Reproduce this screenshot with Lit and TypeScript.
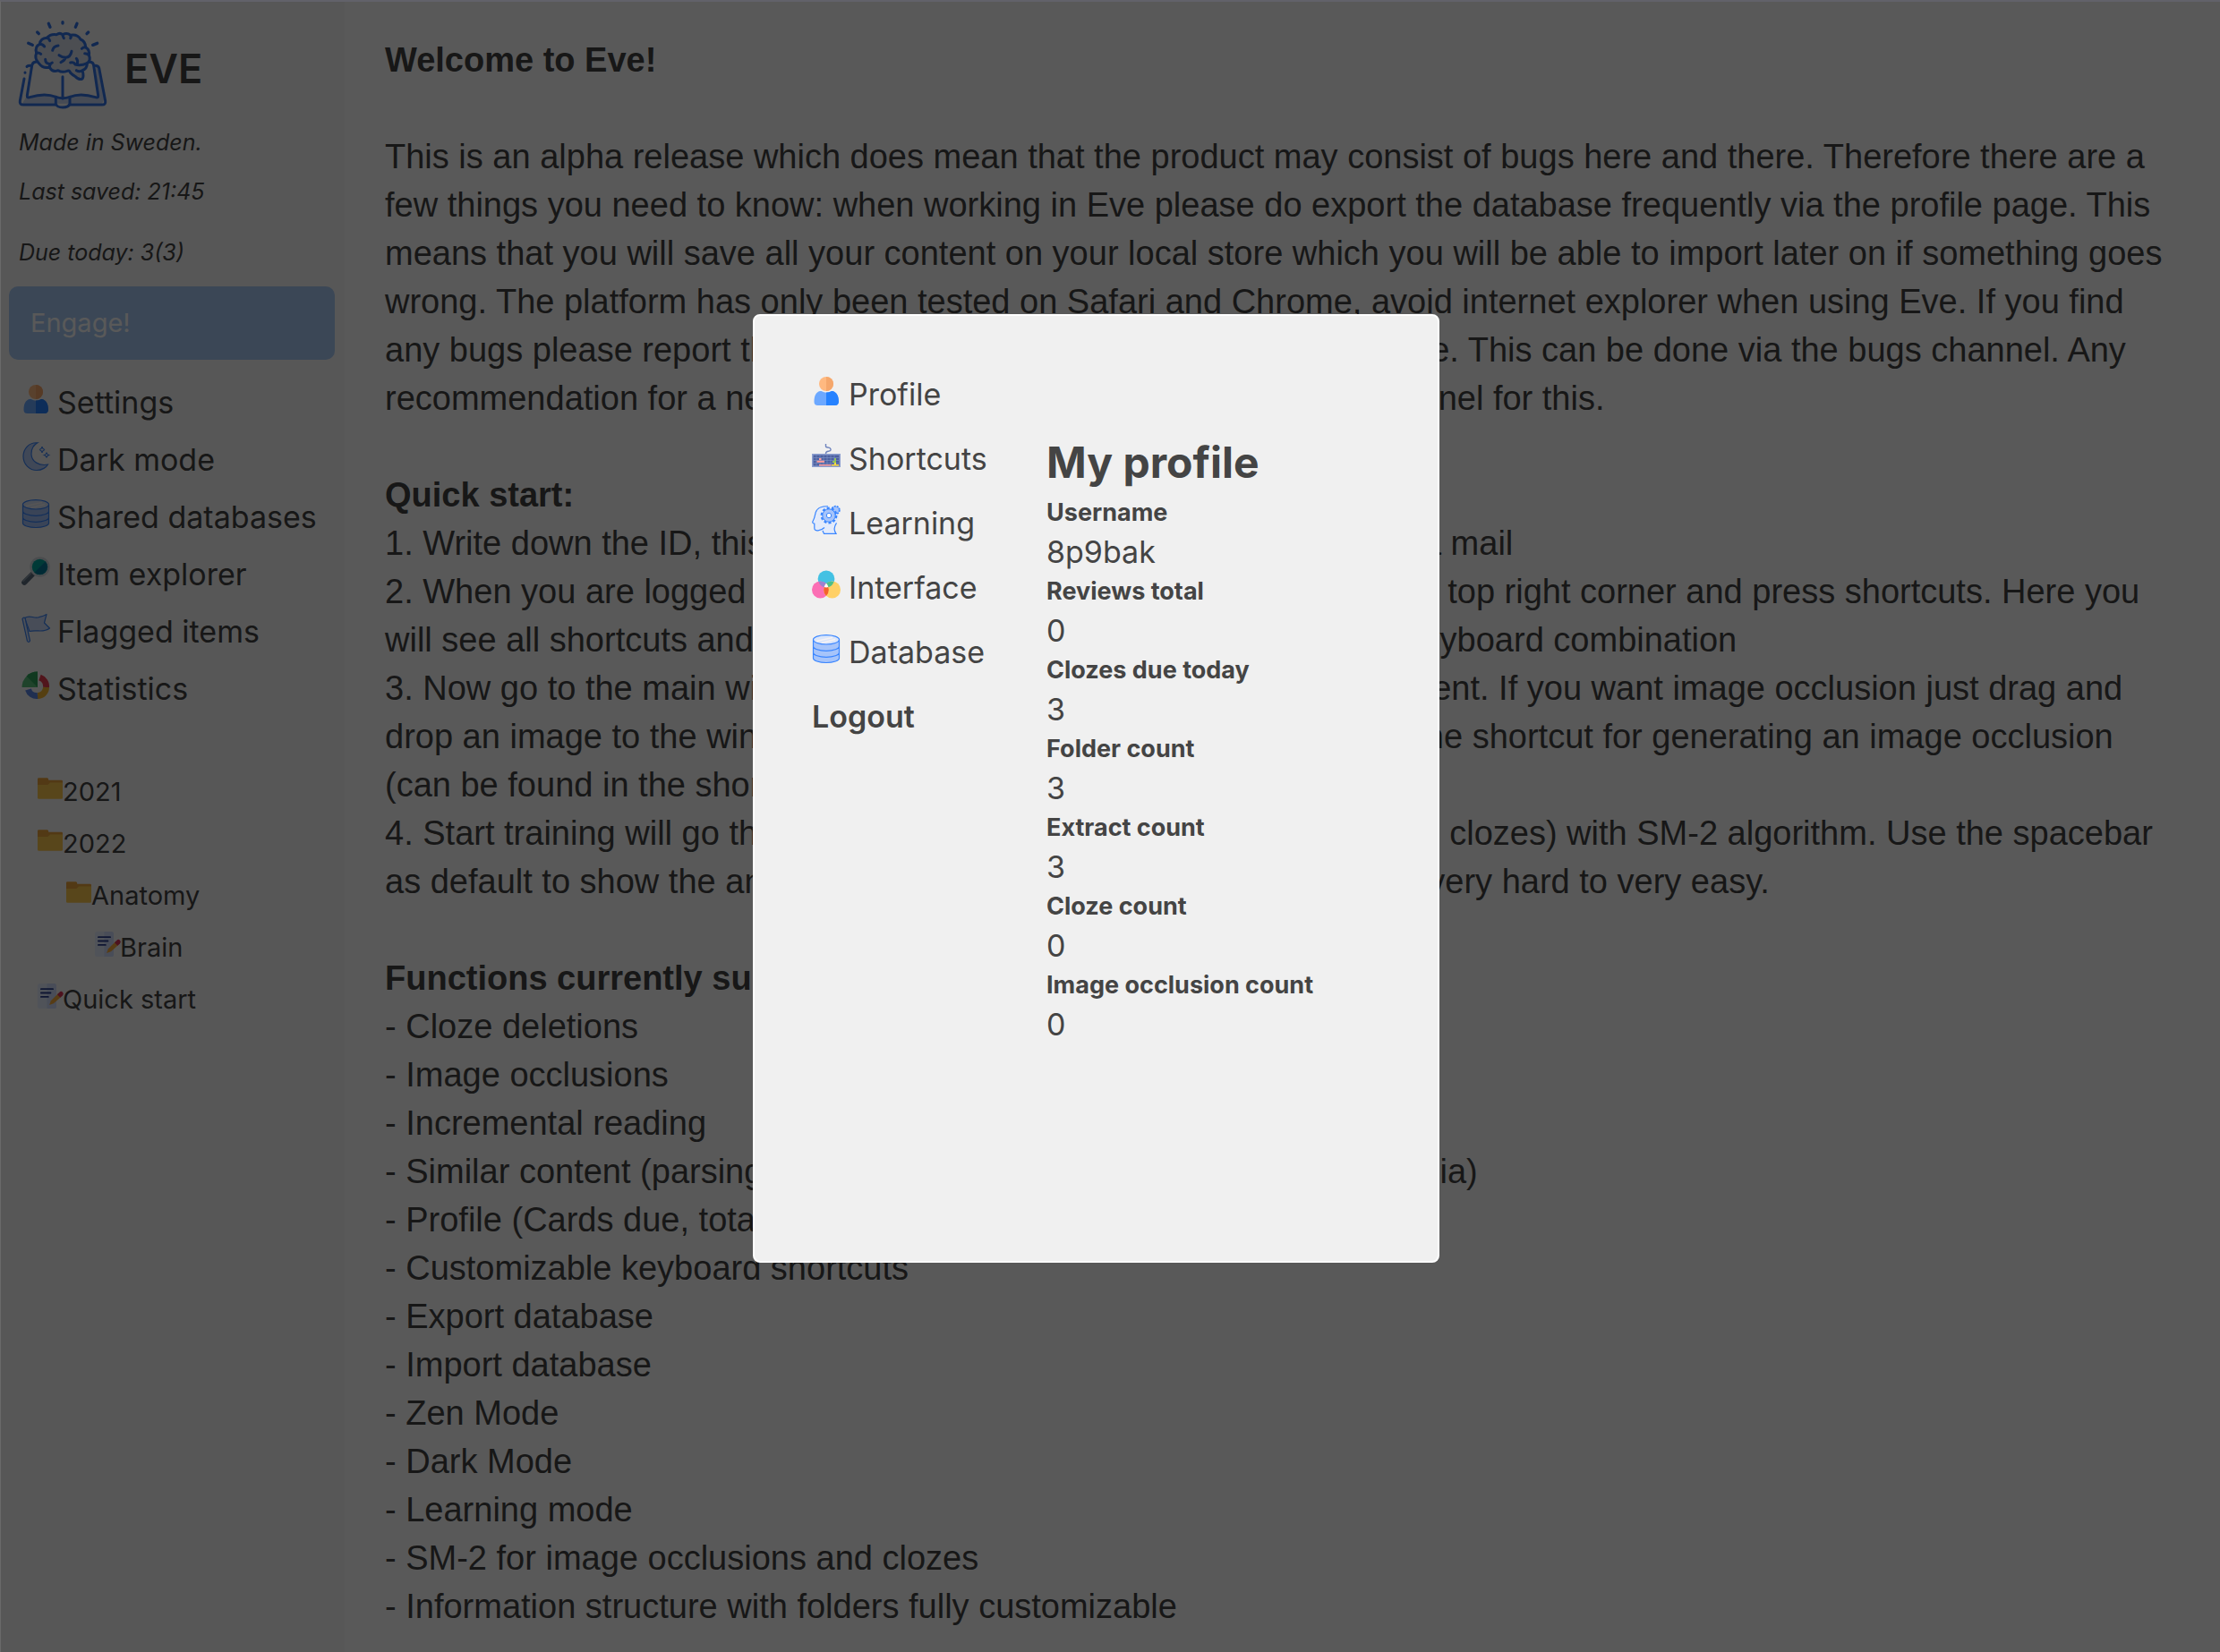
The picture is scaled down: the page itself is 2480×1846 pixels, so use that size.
import { LitElement, html, svg, css } from "lit";
import { customElement, property } from "lit/decorators.js";

const DRAWINGS: Record<string, unknown> = {
  user: svg`
    <circle cx="16" cy="8" r="8" fill="#ffb980"/>
    <path d="M16 0a8 8 0 0 1 0 16z" fill="#f5a76c"/>
    <path d="M9 16h1.500q6 3.400 12 0H23c4.600 1 7 5.500 7 12q-.4 4-4 4H6.500q-4-.2-4-4c0-6.500 2-11 6.500-12z" fill="#6ca8ff"/>
    <path d="M16 17.600q3 0 6-1.600h1c4.600 1 7 5.500 7 12q-.4 4-4 4H16z" fill="#2682ff"/>`,
  moon: svg`
    <path d="M18 .8C8 0 2 8 2 16c0 9 7 15.500 15 15.500 6 0 11-3.500 12.500-6.500C20 27 11 22 11 13 11 7 14 3 18 .8z" fill="#b7cefa" stroke="#3f86f6" stroke-width="1.200"/>
    <path d="M23 5q.6 3 3 3.500-2.400.6-3 3.500-.6-3-3-3.500 2.400-.5 3-3.500zM28 11.500q.5 2.500 2.500 3-2 .6-2.500 3-.5-2.400-2.500-3 2-.5 2.500-3z" fill="none" stroke="#3f86f6" stroke-width="1.100"/>`,
  database: svg`
    <path d="M1.500 5.500v21c0 2.700 6.500 5 14.500 5s14.500-2.300 14.500-5v-21z" fill="#a6c4fa"/>
    <ellipse cx="16" cy="5.800" rx="14.500" ry="5.200" fill="#dbe6fa"/>
    <path d="M5 7.500l18-4M11 9.500l15-4" stroke="#f6f2f4" stroke-width="1.600"/>
    <path d="M1.500 5.800v20.700c0 2.700 6.500 5 14.500 5s14.500-2.300 14.500-5V5.800M1.500 5.800c0-2.900 6.500-5.200 14.500-5.200s14.500 2.300 14.500 5.200S24 11 16 11 1.500 8.700 1.500 5.800zM1.500 13c0 3 6.500 5.300 14.500 5.300S30.500 16 30.500 13M1.500 20c0 3 6.500 5.300 14.500 5.300S30.500 23 30.500 20" fill="none" stroke="#3a86ff" stroke-width="1.200"/>`,
  magnifier: svg`
    <path d="M12.500 19.500L3.200 28.800" stroke="#5d6d7e" stroke-width="6" stroke-linecap="round"/>
    <path d="M11 18L1.500 27.500" stroke="#8a98a5" stroke-width="2"/>
    <circle cx="20.500" cy="11.500" r="11.200" fill="#d3dae0"/>
    <circle cx="20.500" cy="11.500" r="8.700" fill="#00a79d"/>
    <path d="M26.700 5.400a8.700 8.700 0 0 1-12.300 12.300z" fill="#007a99"/>`,
  flag: svg`
    <path d="M3.500 4.500c6-4 10 1 16-.8 4-1 6-1.700 8.500-3.200l-2.500 9.500 6 6c-8 6-14 1-22.500 3.500z" fill="#cddcfb" stroke="#3f86f6" stroke-width="1.200" stroke-linejoin="round"/>
    <path d="M1 5.500q1-2 3-1l5.500 25.500q-1.500 2.500-3 .5z" fill="#dbe6fa" stroke="#3f86f6" stroke-width="1.200"/>`,
  chart: svg`
    <path d="M18 18V.5A17.500 17.500 0 0 0 .5 18z" fill="#59c07d"/>
    <path d="M18 18V.5A17.500 17.500 0 0 0 5.600 5.600z" fill="#2fa35c"/>
    <path d="M20.500 7A10.500 10.500 0 0 1 27.500 18" fill="none" stroke="#e83e50" stroke-width="7"/>
    <path d="M27.500 18A9.500 9.500 0 0 1 18 27.500" fill="none" stroke="#f2b632" stroke-width="7"/>
    <path d="M18 27.500A10 10 0 0 1 7.500 20.500" fill="none" stroke="#5c86e6" stroke-width="7"/>`,
  keyboard: svg`
    <g transform="translate(0 -3)">
      <path d="M15.500 6v2.500q0 1.500 2.500 1.500t3 2-2.500 2.200-3 2.800" fill="none" stroke="#6f84bd" stroke-width="1.400"/>
      <path d="M0 17h32v15H0z" fill="#8d9fd0"/>
      <path d="M1.500 18.500h29v12h-29z" fill="#4c60a0"/>
      <path d="M2 21.500h28M2 24.500h28M2 27.700h28M5 18.500v12M9 18.500v12M13 18.500v12M17 18.500v12M21 18.500v12M25 18.500v12" stroke="#8093c6" stroke-width=".6"/>
      <path d="M8 22h2.500v2H8zM5.500 24.800h8.500v2H5.500zM8 29h13.500v1.500H8z" fill="#ff9d9d"/>
      <path d="M25 22h2v5h-4v-2h2z" fill="#91c35a"/>
      <path d="M25 27h2v2h3v1.500h-8V29h3z" fill="#ffdc40"/>
    </g>`,
  learning: svg`
    <path d="M7 4C2 8 4 13 1 18c-1 2 1 2 2 3v6c1 3 5 1 8 1.500l2 3h14c-3-5-1-9 2-14 2-6 1-14-7-16C16 0 11 1 7 4z" fill="#e3ebfb"/>
    <path d="M18 .8C12 .4 6 2.500 4.200 7.500 3.300 12 3 14 .8 18q-.5 1.500 2 2.200v5q0 3 4 2.600 4-.2 7.200-3.300M12 28l1.500 3.400H27c-3-4-1.500-9 .5-12" fill="none" stroke="#3a86ff" stroke-width="1.200"/>
    <circle cx="26.500" cy="5" r="4.300" fill="#a6c4fa" stroke="#3a86ff" stroke-width="1.800" stroke-dasharray="2 1"/>
    <circle cx="19" cy="11" r="8.200" fill="none" stroke="#3a86ff" stroke-width="2.400" stroke-dasharray="3 2.150"/>
    <circle cx="19" cy="11" r="7.200" fill="#a6c4fa" stroke="#3a86ff" stroke-width="1"/>
    <circle cx="19" cy="11" r="2.700" fill="#fff" stroke="#3a86ff" stroke-width="1"/>`,
  venn: svg`
    <circle cx="16" cy="10" r="9.400" fill="#43c1e3"/>
    <circle cx="9.400" cy="22" r="9.400" fill="#fb6fb4"/>
    <circle cx="22.600" cy="22" r="9.400" fill="#ffd066"/>
    <path d="M7.500 13.200a9.400 9.400 0 0 1 8.500 1.800 9.400 9.400 0 0 0-2.500 4.200 9.400 9.400 0 0 1-6-6z" fill="#9c83cf"/>
    <path d="M24.500 13.200a9.400 9.400 0 0 0-8.500 1.800 9.400 9.400 0 0 1 2.500 4.200 9.400 9.400 0 0 0 6-6z" fill="#4dbf88"/>
    <path d="M16 15.300a9.400 9.400 0 0 1 0 13.400 9.400 9.400 0 0 1 0-13.400z" fill="#f4622a"/>
    <path d="M16 14.800a9.400 9.400 0 0 1 2.300 4.300q-2.300.6-4.600 0A9.400 9.400 0 0 1 16 14.800z" fill="#fff"/>`,
  folder: svg`
    <path d="M0 4q0-1.500 1.500-1.500H12.500q1.500 0 1.500 3H30.500q1.500 0 1.500 1.500v5H0z" fill="#eba43c"/>
    <path d="M0 11.500h13l3-3H32V28q0 1.500-1.500 1.500h-29Q0 29.500 0 28z" fill="#fbc94f"/>`,
  note: svg`
    <rect width="24" height="32" rx="3" fill="#e6edff"/>
    <path d="M12 0h9q3 0 3 3v26q0 3-3 3h-9z" fill="#d0dcfb"/>
    <path d="M4.500 7h15M4.500 12h12M4.500 17h9" stroke="#2d4191" stroke-width="2.200" stroke-linecap="round"/>
    <path d="M15 27.500l2-5.500L26.500 12.500l4 4L20.500 25.500z" fill="#f8ad3c"/>
    <path d="M25 14l3-3q2-2 4 0t0 4l-3 3z" fill="#dc3558"/>`,
};

@customElement("eve-icon")
export class EveIcon extends LitElement {
  @property() name = "user";

  static styles = css`
    :host { display: inline-block; flex: none; width: 32px; height: 32px; }
    svg { display: block; width: 100%; height: 100%; overflow: visible; }
  `;

  render() {
    return html`<svg viewBox="0 0 32 32" aria-hidden="true">${DRAWINGS[this.name]}</svg>`;
  }
}

@customElement("eve-logo")
export class EveLogo extends LitElement {
  static styles = css`
    :host { display: block; flex: none; width: 98px; height: 98px; }
    svg { display: block; width: 100%; height: 100%; overflow: visible; }
  `;

  render() {
    return html`<svg viewBox="33 39 294 294" aria-hidden="true">
      <path d="M61 290L45 317H312L320 300 302 195 290 190 299 296Q240 280 202 295 180 303 158 295 120 280 61 296z" fill="#a6c0ee" opacity=".6"/>
      <path d="M100 180Q86 165 92 148Q86 125 103 118Q106 98 127 97Q140 82 160 86Q170 78 180 86Q195 78 206 88Q230 84 240 102Q256 108 257 128Q272 138 268 155Q276 172 262 182Q262 200 248 206Q255 226 242 236Q232 238 205 218Q206 205 195 208Q178 215 165 206Q145 212 136 195Q115 202 100 180z" fill="#d9deea"/>
      <g fill="none" stroke="#3273e6" stroke-width="9" stroke-linecap="round" stroke-linejoin="round">
        <path stroke-width="10" d="M180 44v4M133 49l5 12M228 49l-5 12M95 78l5 5M266 78l-5 5M65 115l14 6M296 115l-15 6"/>
        <path d="M60 193q3-3 12-3M54 213v.5M51 234L37 308Q35 321 48 321H156M204 321H312Q325 321 323 308L302 198Q300 190 288 190"/>
        <path d="M90 178Q79 178 77 190L61 290Q60 299 70 296Q120 280 158 295M270 178Q283 178 284 190L299 290Q300 299 290 296Q240 280 204 295M180 227V300"/>
        <path d="M157 295Q180 303 204 295V318Q200 330 180 330Q160 330 157 318z"/>
        <path d="M100 182Q84 165 92 148Q86 125 103 118Q106 98 127 97Q140 82 160 86Q170 78 180 86Q195 78 206 88Q230 84 240 102Q256 108 257 128Q272 138 268 155Q276 172 262 182Q262 200 246 206Q236 212 226 206M100 182Q115 202 136 195Q145 214 165 206Q178 215 195 208Q202 204 206 214Q214 222 222 226Q236 240 246 234Q252 226 246 206"/>
        <path d="M146 139Q149 125 165 123M210 142Q206 162 190 163Q178 162 168 155M190 163Q186 174 174 179M103 118Q113 118 119 126M127 97Q135 99 137 107M180 86Q180 92 184 98M206 88Q210 94 206 98M257 128Q248 128 244 133M268 155Q262 149 254 149M92 148Q100 145 107 151M122 169Q122 182 134 184M136 195Q136 184 145 180M206 180Q218 178 222 186Q240 192 262 182M226 166Q232 172 229 184"/>
      </g>
    </svg>`;
  }
}

const NAV = [
  ["user", "Settings"],
  ["moon", "Dark mode"],
  ["database", "Shared databases"],
  ["magnifier", "Item explorer"],
  ["flag", "Flagged items"],
  ["chart", "Statistics"],
];

const TREE: [string, string, number][] = [
  ["folder", "2021", 0],
  ["folder", "2022", 0],
  ["folder", "Anatomy", 1],
  ["note", "Brain", 2],
  ["note", "Quick start", 0],
];

@customElement("eve-sidebar")
export class EveSidebar extends LitElement {
  static styles = css`
    :host { display: block; background: #f9f9f9; color: #444; font-family: Inter, "Open Sans", sans-serif; }
    .brand { display: flex; align-items: center; gap: 20px; padding: 21px 20px 0; }
    h1 { margin: 0; padding-top: 10px; font-size: 45px; line-height: 56px; font-weight: 600; }
    .facts { padding: 20px 20px; font-style: italic; font-size: 25px; line-height: 36px; }
    .facts p { margin: 0 0 19px; }
    .facts p + p { margin-bottom: 32px; }
    .facts p:last-child { margin-bottom: 0; }
    .engage {
      display: block; width: calc(100% - 20px); height: 82px; margin: 0 10px 16px 9px; padding: 0 24px;
      border: 0; border-radius: 10px; background: #a9cbf6; color: #fff; text-align: left;
      font: 29px/36px Inter, "Open Sans", sans-serif;
    }
    ul { margin: 0; padding: 0; list-style: none; }
    a { display: flex; align-items: baseline; color: inherit; text-decoration: none; white-space: nowrap; }
    .nav { padding-left: 23px; }
    .nav a { gap: 8px; font-size: 34px; line-height: 64px; }
    .tree { padding: 54px 0 0 41px; }
    .tree a { font-size: 29px; line-height: 58px; }
    .tree eve-icon { width: 28px; height: 28px; }
    .level1 { padding-left: 32px; }
    .level2 { padding-left: 64px; }
  `;

  render() {
    return html`
      <header class="brand"><eve-logo></eve-logo><h1>EVE</h1></header>
      <div class="facts">
        <p>Made in Sweden.</p>
        <p>Last saved: 21:45</p>
        <p>Due today: 3(3)</p>
      </div>
      <button class="engage" type="button">Engage!</button>
      <nav>
        <ul class="nav">
          ${NAV.map(([icon, label]) => html`<li><a href="#"><eve-icon name=${icon}></eve-icon>${label}</a></li>`)}
        </ul>
        <ul class="tree">
          ${TREE.map(([icon, label, level]) => html`<li class="level${level}"><a href="#"><eve-icon name=${icon}></eve-icon>${label}</a></li>`)}
        </ul>
      </nav>
    `;
  }
}

const STEPS = [
  "1. Write down the ID, this is your login and cannot be retrieved using a mail",
  "2. When you are logged in then click on the settings icon placed in the top right corner and press shortcuts. Here you will see all shortcuts and you can also customize these to your own keyboard combination",
  "3. Now go to the main window and start writing or pasting in your content. If you want image occlusion just drag and drop an image to the window and then press the image and activate the shortcut for generating an image occlusion (can be found in the shortcuts menu)",
  "4. Start training will go through all the elements (image occlusions and clozes) with SM-2 algorithm. Use the spacebar as default to show the answer and then grade the difficulty level from very hard to very easy.",
];

const FEATURES = [
  "Cloze deletions",
  "Image occlusions",
  "Incremental reading",
  "Similar content (parsing similar articles and content from the Wikipedia)",
  "Profile (Cards due, total reviews)",
  "Customizable keyboard shortcuts",
  "Export database",
  "Import database",
  "Zen Mode",
  "Dark Mode",
  "Learning mode",
  "SM-2 for image occlusions and clozes",
  "Information structure with folders fully customizable",
];

@customElement("eve-document")
export class EveDocument extends LitElement {
  static styles = css`
    :host {
      display: block; padding: 38px 50px 24px 45px; background: #fff; color: #444;
      font: 38px/54px "Liberation Sans", Arial, sans-serif;
    }
    h2 { margin: 0; font: inherit; font-weight: 700; }
    .title { margin-bottom: 54px; }
    p { margin: 0; }
    .intro, .steps { margin-bottom: 54px; }
  `;

  render() {
    return html`
      <h2 class="title">Welcome to Eve!</h2>
      <p class="intro">
        This is an alpha release which does mean that the product may consist of bugs here and there. Therefore there
        are a few things you need to know: when working in Eve please do export the database frequently via the profile
        page. This means that you will save all your content on your local store which you will be able to import later
        on if something goes wrong. The platform has only been tested on Safari and Chrome, avoid internet explorer when
        using Eve. If you find any bugs please report them to the developers within the Discord page. This can be done
        via the bugs channel. Any recommendation for a new feature can be shared on the support channel for this.
      </p>
      <h2>Quick start:</h2>
      <div class="steps">${STEPS.map((step) => html`<p>${step}</p>`)}</div>
      <h2>Functions currently supported:</h2>
      ${FEATURES.map((feature) => html`<p>- ${feature}</p>`)}
    `;
  }
}

const SECTIONS = [
  ["user", "Profile"],
  ["keyboard", "Shortcuts"],
  ["learning", "Learning"],
  ["venn", "Interface"],
  ["database", "Database"],
];

const STATS = [
  ["Username", "8p9bak"],
  ["Reviews total", "0"],
  ["Clozes due today", "3"],
  ["Folder count", "3"],
  ["Extract count", "3"],
  ["Cloze count", "0"],
  ["Image occlusion count", "0"],
];

@customElement("eve-profile-dialog")
export class EveProfileDialog extends LitElement {
  static styles = css`
    :host {
      display: grid; grid-template-columns: 262px 1fr; box-sizing: border-box; width: 767px; max-width: 100%;
      min-height: 1060px; padding: 52px 64px; border: 2px solid #fff; border-radius: 8px;
      background: #f0f0f0; color: #444; font-family: Inter, "Open Sans", sans-serif;
    }
    button {
      display: flex; align-items: baseline; gap: 9px; padding: 0; border: 0; background: none; color: inherit;
      font: 34px/72px Inter, "Open Sans", sans-serif;
    }
    .logout { font-weight: 600; }
    .details { padding-top: 77px; }
    h2 { margin: 0; font-size: 48px; line-height: 69px; font-weight: 700; }
    dl { margin: 0; line-height: 44px; }
    dt { font-size: 27px; font-weight: 700; white-space: nowrap; }
    dd { margin: 0; font-size: 34px; }
  `;

  render() {
    return html`
      <nav>
        ${SECTIONS.map(([icon, label]) => html`<button type="button"><eve-icon name=${icon}></eve-icon>${label}</button>`)}
        <button class="logout" type="button">Logout</button>
      </nav>
      <section class="details">
        <h2>My profile</h2>
        <dl>${STATS.map(([label, value]) => html`<dt>${label}</dt><dd>${value}</dd>`)}</dl>
      </section>
    `;
  }
}

@customElement("app-root")
export class AppRoot extends LitElement {
  static styles = css`
    :host {
      display: grid; position: relative; grid-template-columns: 384px minmax(0, 1fr); box-sizing: border-box;
      min-height: 100vh; border-top: 2px solid #62626a; border-left: 1px solid #6a6a6a;
    }
    .overlay {
      position: absolute; inset: 0; display: flex; justify-content: center; align-items: center;
      box-sizing: border-box; padding: 0 32px 86px 0; background: rgba(0, 0, 0, 0.65);
    }
  `;

  render() {
    return html`
      <eve-sidebar></eve-sidebar>
      <eve-document></eve-document>
      <div class="overlay"><eve-profile-dialog role="dialog" aria-label="My profile"></eve-profile-dialog></div>
    `;
  }
}
